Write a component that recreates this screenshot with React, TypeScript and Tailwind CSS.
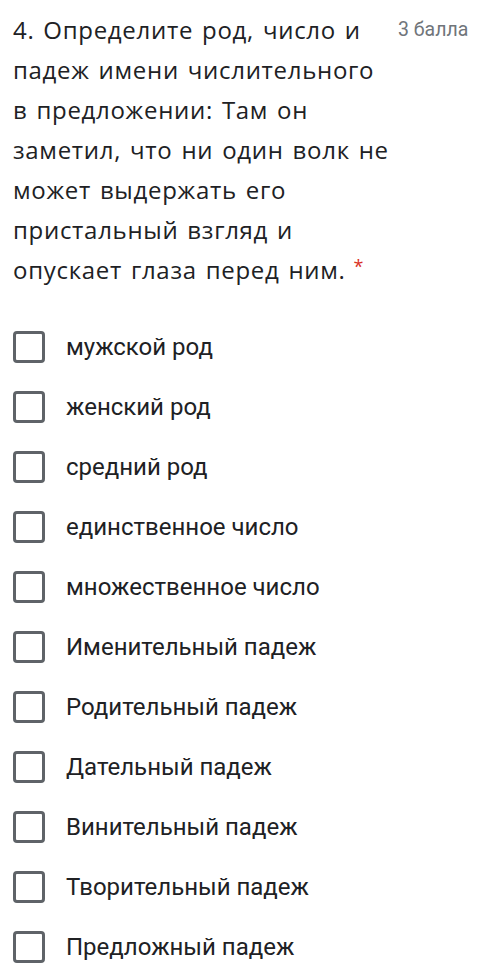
const options = [
  "мужской род",
  "женский род",
  "средний род",
  "единственное число",
  "множественное число",
  "Именительный падеж",
  "Родительный падеж",
  "Дательный падеж",
  "Винительный падеж",
  "Творительный падеж",
  "Предложный падеж",
];

const titleLines = [
  "4. Определите род, число и",
  "падеж имени числительного",
  "в предложении: Там он",
  "заметил, что ни один волк не",
  "может выдержать его",
  "пристальный взгляд и",
];

export default function App() {
  return (
    <div className="min-h-[972px] w-[500px] bg-white overflow-hidden">
      {/* Question header */}
      <div className="flex items-start pl-[13px] pt-[10px]">
        <div className="w-[385px] shrink-0 text-[24px] leading-[40px] tracking-[0.7px] [word-spacing:2px] text-[#202124] font-['Open_Sans',sans-serif] whitespace-nowrap">
          {titleLines.map((l) => (
            <div key={l}>{l}</div>
          ))}
          <div>
            опускает глаза перед ним.
            <span className="text-[#d93025] text-[18px] align-top ml-[8px] relative top-[-4px]">*</span>
          </div>
        </div>
        <div className="text-[19.5px] leading-[40px] text-[#70757a] font-['Roboto',sans-serif] whitespace-nowrap">
          3 балла
        </div>
      </div>

      {/* Options */}
      <div className="mt-[27px] flex flex-col">
        {options.map((label) => (
          <label key={label} className="flex items-center h-[60px] pl-[13px]">
            <span className="w-[32px] h-[32px] border-[3px] border-[#5f6368] rounded-[4px] shrink-0" />
            <span className="ml-[21px] text-[24px] text-[#202124] font-['Roboto',sans-serif]">
              {label}
            </span>
          </label>
        ))}
      </div>
    </div>
  );
}
